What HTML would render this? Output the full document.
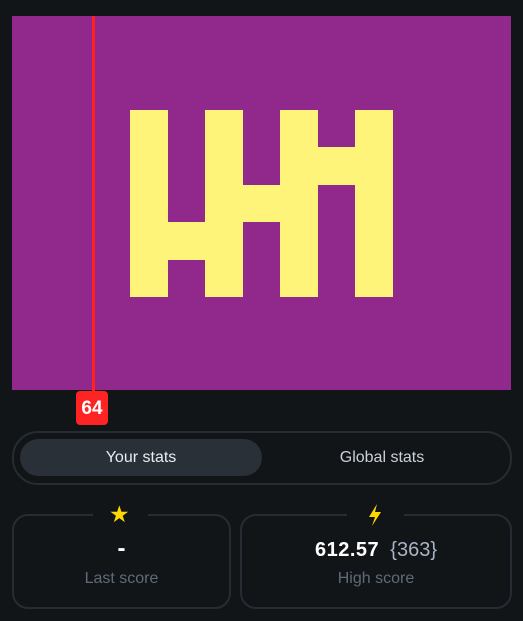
<!DOCTYPE html><html><head><style>
body{margin:0;width:523px;height:621px;background:#121518;font-family:"Liberation Sans",sans-serif;position:relative;overflow:hidden}
.a{position:absolute}
.y{background:#fff47a;position:absolute}
</style></head><body>
<div class="a" style="left:12px;top:16px;width:499px;height:374px;background:#91298c"></div>
<div class="y" style="left:130px;top:110px;width:38px;height:187px"></div>
<div class="y" style="left:205px;top:110px;width:38px;height:187px"></div>
<div class="y" style="left:280px;top:110px;width:38px;height:187px"></div>
<div class="y" style="left:355px;top:110px;width:38px;height:187px"></div>
<div class="y" style="left:168px;top:222px;width:37px;height:38px"></div>
<div class="y" style="left:243px;top:185px;width:37px;height:37px"></div>
<div class="y" style="left:318px;top:147px;width:37px;height:38px"></div>
<div class="a" style="left:92px;top:16px;width:3px;height:376px;background:#ff2020"></div>
<div class="a" style="left:76px;top:391px;width:32px;height:34px;background:#ff2424;border-radius:4px;color:#fff;font-weight:bold;font-size:19px;line-height:36px;text-align:center">64</div>
<div class="a" style="left:12px;top:431px;width:496px;height:50px;border:2px solid #262c33;border-radius:26px"></div>
<div class="a" style="left:20px;top:439px;width:242px;height:37px;background:#2a3038;border-radius:19px;color:#e8ecf0;font-size:16px;line-height:37px;text-align:center">Your stats</div>
<div class="a" style="left:262px;top:439px;width:240px;height:37px;color:#c8d0da;font-size:16px;line-height:37px;text-align:center">Global stats</div>
<div class="a" style="left:12px;top:514px;width:215px;height:91px;border:2px solid #262c33;border-radius:16px"></div>
<div class="a" style="left:93px;top:505px;width:55px;height:20px;background:#121518"></div>
<div class="a" style="left:109px;top:501px;color:#ffd800;font-size:23px">★</div>
<div class="a" style="left:12px;top:535px;width:219px;text-align:center;color:#fff;font-weight:bold;font-size:24px">-</div>
<div class="a" style="left:12px;top:570px;width:219px;text-align:center;color:#5f6b7a;font-size:16px">Last score</div>
<div class="a" style="left:240px;top:514px;width:268px;height:91px;border:2px solid #262c33;border-radius:16px"></div>
<div class="a" style="left:347px;top:505px;width:57px;height:20px;background:#121518"></div>
<svg class="a" style="left:366px;top:503px" width="18" height="24" viewBox="0 0 18 24"><path d="M11 1 L3 14 H9 L6 23 L15 9 H9 Z" fill="#ffd800"/></svg>
<div class="a" style="left:240px;top:539px;width:272px;text-align:center;font-size:20px"><b style="color:#fff;letter-spacing:0.5px">612.57</b>&nbsp; <span style="color:#a8b4c4">{363}</span></div>
<div class="a" style="left:240px;top:570px;width:272px;text-align:center;color:#5f6b7a;font-size:16px">High score</div>
</body></html>
